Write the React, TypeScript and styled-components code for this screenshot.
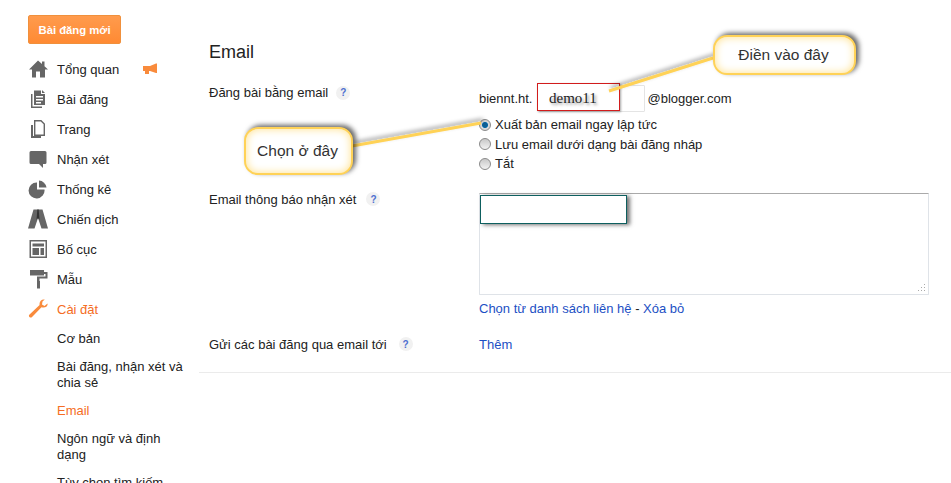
import styled, { createGlobalStyle } from "styled-components";
import { ReactNode } from "react";

const GlobalStyle = createGlobalStyle`
    html, body {
        margin: 0;
        padding: 0;
        background: #fff;
    }
    body {
        font-family: "Liberation Sans", Arial, sans-serif;
        font-size: 13px;
        color: #222;
    }
`;

const Page = styled.div`
    position: relative;
    display: flex;
    width: 951px;
    height: 483px;
    overflow: hidden;
`;

const Sidebar = styled.nav`
    width: 199px;
    flex: none;
    padding: 15px 0 0 28px;
    box-sizing: border-box;
`;

const NewPostButton = styled.div`
    width: 93px;
    height: 29px;
    margin-bottom: 10px;
    display: flex;
    align-items: center;
    justify-content: center;
    box-sizing: border-box;
    border: 1px solid #f0903c;
    border-radius: 2px;
    background: linear-gradient(#ff9b4d, #ff8a33);
    color: #fff;
    font-size: 11.3px;
    font-weight: 700;
`;

const NavRow = styled.div<{ $active?: boolean }>`
    display: flex;
    align-items: center;
    height: 30px;
    color: ${p => (p.$active ? "#f56d24" : "#222")};
`;

const NavIcon = styled.span`
    width: 29px;
    height: 20px;
    flex: none;
    display: flex;
    align-items: center;
`;

const NavLabel = styled.span`
    width: 85px;
`;

const SubNav = styled.div`
    padding-left: 29px;
    padding-top: 7px;
    display: flex;
    flex-direction: column;
    gap: 12px;
`;

const SubItem = styled.div<{ $active?: boolean }>`
    line-height: 16px;
    width: 130px;
    color: ${p => (p.$active ? "#f56d24" : "#222")};
`;

const Main = styled.main`
    flex: 1;
    padding-top: 42px;
`;

const Title = styled.h1`
    margin: 0 0 21px 10px;
    font-size: 18px;
    line-height: 21px;
    font-weight: 400;
    color: #222;
`;

const SettingRow = styled.div<{ $after: number }>`
    display: grid;
    grid-template-columns: 270px 449px;
    padding-left: 10px;
    margin-bottom: ${p => p.$after}px;
`;

const SettingLabel = styled.div<{ $top: number; $gap: number }>`
    display: flex;
    align-items: center;
    gap: ${p => p.$gap}px;
    height: 17px;
    margin-top: ${p => p.$top}px;
`;

const Help = styled.span`
    width: 14px;
    height: 14px;
    border-radius: 50%;
    background: #f1f1f1;
    color: #4d6fd0;
    font-size: 10px;
    font-weight: 700;
    display: flex;
    align-items: center;
    justify-content: center;
`;

const AddressLine = styled.div`
    display: flex;
    align-items: center;
    height: 28px;
`;

const AddressInput = styled.div`
    width: 106px;
    height: 27px;
    margin: 0 3px 0 6px;
    box-sizing: border-box;
    border: 1px solid #e4e4e4;
    border-radius: 1px;
`;

const RadioList = styled.div`
    margin-top: 3px;
    display: flex;
    flex-direction: column;
`;

const RadioRow = styled.label`
    display: flex;
    align-items: center;
    gap: 4px;
    height: 19.5px;
`;

const Radio = styled.span<{ $on?: boolean }>`
    width: 12px;
    height: 12px;
    box-sizing: border-box;
    border-radius: 50%;
    border: 1px solid #8a8a8a;
    background: ${p =>
        p.$on
            ? "radial-gradient(circle, #0a5f96 0 2.5px, #4aa3d8 3px, #d8d8d8 3.5px)"
            : "linear-gradient(#c8c8c8, #f2f2f2)"};
`;

const TextBox = styled.div`
    position: relative;
    width: 450px;
    height: 102px;
    box-sizing: border-box;
    border: 1px solid #dfe3e8;
    border-top-color: #aaa;
    border-radius: 1px;
`;

const ResizeGrip = styled.svg`
    position: absolute;
    right: 2px;
    bottom: 2px;
`;

const LinkLine = styled.div`
    margin-top: 6px;
    line-height: 16px;
`;

const Link = styled.a`
    color: #1c4fc4;
`;

const Divider = styled.div`
    height: 1px;
    background: #ebebeb;
`;

const Callout = styled.div<{ $x: number; $y: number; $w: number; $h: number }>`
    position: absolute;
    left: ${p => p.$x}px;
    top: ${p => p.$y}px;
    width: ${p => p.$w}px;
    height: ${p => p.$h}px;
    box-sizing: border-box;
    padding-right: 2px;
    display: flex;
    align-items: center;
    justify-content: center;
    border: 2px solid #ffd257;
    border-radius: 14px;
    background: #fff;
    box-shadow: inset 0 0 9px #ffe08a, 3px -2px 5px rgba(0, 0, 0, 0.6);
    font-size: 15.5px;
    color: #333;
`;

const LineLayer = styled.svg`
    position: absolute;
    left: 0;
    top: 0;
    pointer-events: none;
`;

const DemoBox = styled.div`
    position: absolute;
    left: 537px;
    top: 83px;
    width: 83px;
    height: 28px;
    box-sizing: border-box;
    border: 1px solid #d21c1c;
    background: #fff;
    box-shadow: 1px 1px 2px rgba(0, 0, 0, 0.35);
    padding: 1px 0 0 11px;
    font-family: "Liberation Serif", serif;
    font-size: 15px;
    line-height: 26px;
    color: #222;
    text-shadow: 2px 2px 3px rgba(0, 0, 0, 0.4);
`;

const CoverBox = styled.div`
    position: absolute;
    left: 480px;
    top: 195px;
    width: 147px;
    height: 29px;
    box-sizing: border-box;
    border: 1px solid #0d5f5f;
    background: #fff;
    box-shadow: 3px 1px 4px rgba(0, 0, 0, 0.55);
`;

function Icon({ children, w = 20, h = 20 }: { children: ReactNode; w?: number; h?: number }) {
    return <svg width={w} height={h} viewBox={`0 0 ${w} ${h}`}>{children}</svg>;
}

const grey = "#666";

const icons: Record<string, ReactNode> = {
    home: <Icon><path fill={grey} d="M10 1.5 L14 5 V2.5 H16.5 V7.2 L20 10.5 H17 V18.5 H12 V12.5 H8 V18.5 H4 V10.5 H1 Z" /></Icon>,
    posts: (
        <Icon>
            <path fill={grey} d="M3 5 H4.5 V17.5 H14 V19 H3 Z" />
            <path fill={grey} fillRule="evenodd" d="M6 1.5 H13 V5 H17 V16 H6 Z M8 7 V8.5 H15 V7 Z M8 10 V11.5 H15 V10 Z M8 13 V14.5 H13 V13 Z" />
            <path fill={grey} d="M14 1 L17 4 H14 Z" />
        </Icon>
    ),
    pages: (
        <Icon>
            <path fill={grey} d="M3 6 H5 V17 H13 V19 H3 Z" />
            <path fill="none" stroke={grey} strokeWidth="1.4" d="M6.7 1.7 H13 L16.3 5 V16.3 H6.7 Z" />
        </Icon>
    ),
    comments: <Icon><path fill={grey} d="M3 2 H17 Q18.5 2 18.5 3.5 V13.5 Q18.5 15 17 15 H15 V19 L11 15 H3 Q1.5 15 1.5 13.5 V3.5 Q1.5 2 3 2 Z" /></Icon>,
    stats: (
        <Icon>
            <path fill={grey} d="M9 3.5 V10.5 H16.5 A8 8 0 1 1 9 3.5 Z" />
            <path fill={grey} d="M11 1.5 A8 8 0 0 1 18.5 8.5 H11 Z" />
        </Icon>
    ),
    campaign: (
        <Icon>
            <path fill={grey} d="M5.5 0.5 H14.5 L20 19.5 H13.5 L10 9 L6.5 19.5 H0 Z" />
            <path fill="#333" d="M9.3 0.5 H10.7 L11.5 11 L10 9 L8.5 11 Z" />
        </Icon>
    ),
    layout: (
        <Icon>
            <path fill={grey} fillRule="evenodd" d="M1.5 1 H19 V19 H1.5 Z M3 2.5 V17.5 H17.5 V2.5 Z" />
            <path fill={grey} d="M4.5 4.5 H16 V7.5 H4.5 Z M4.5 9 H11 V16 H4.5 Z M12.5 9 H16 V16 H12.5 Z" />
        </Icon>
    ),
    template: (
        <Icon>
            <path fill={grey} d="M2 1 H16 V6.5 H2 Z" />
            <path fill={grey} d="M16 3 H19.5 V9.5 H11.5 V12 H9 V7.5 H17.5 V5 H16 Z" />
            <path fill={grey} d="M9 12 H12 V19.5 H9 Z" />
        </Icon>
    ),
    settings: (
        <Icon>
            <path fill="#f98b3c" d="M19.5 4.5 L16.5 7 L14 5.5 L14.5 2.5 L16.8 0.6 C13.5 0 11 2.5 11.6 6 L1.3 15.8 C0 17.2 2.2 19.6 3.8 18.2 L13.5 8.3 C17 9.3 20.2 7.5 19.5 4.5 Z" />
        </Icon>
    ),
};

const navItems = [
    { key: "home", label: "Tổng quan" },
    { key: "posts", label: "Bài đăng" },
    { key: "pages", label: "Trang" },
    { key: "comments", label: "Nhận xét" },
    { key: "stats", label: "Thống kê" },
    { key: "campaign", label: "Chiến dịch" },
    { key: "layout", label: "Bố cục" },
    { key: "template", label: "Mẫu" },
    { key: "settings", label: "Cài đặt", active: true },
];

const subItems = [
    { label: "Cơ bản" },
    { label: "Bài đăng, nhận xét và chia sẻ" },
    { label: "Email", active: true },
    { label: "Ngôn ngữ và định dạng" },
    { label: "Tùy chọn tìm kiếm" },
];

const radios = [
    { label: "Xuất bản email ngay lập tức", on: true },
    { label: "Lưu email dưới dạng bài đăng nháp" },
    { label: "Tắt" },
];

export default function App() {
    return <Page>
        <GlobalStyle />
        <Sidebar>
            <NewPostButton>Bài đăng mới</NewPostButton>
            {navItems.map(item => (
                <NavRow key={item.key} $active={item.active}>
                    <NavIcon>{icons[item.key]}</NavIcon>
                    <NavLabel>{item.label}</NavLabel>
                    {item.key === "home" && (
                        <svg width="16" height="12" viewBox="0 0 16 12">
                            <path fill="#f98b3c" d="M1 3 H8 L14 0.5 H15 V10 H14 L8 8 H7 V11 H3 V8 H1 Z" />
                        </svg>
                    )}
                </NavRow>
            ))}
            <SubNav>
                {subItems.map(item => (
                    <SubItem key={item.label} $active={item.active}>{item.label}</SubItem>
                ))}
            </SubNav>
        </Sidebar>

        <Main>
            <Title>Email</Title>
            <SettingRow $after={19}>
                <SettingLabel $top={0} $gap={8}>Đăng bài bằng email <Help>?</Help></SettingLabel>
                <div>
                    <AddressLine>
                        biennt.ht.
                        <AddressInput />
                        @blogger.com
                    </AddressLine>
                    <RadioList>
                        {radios.map(r => (
                            <RadioRow key={r.label}><Radio $on={r.on} />{r.label}</RadioRow>
                        ))}
                    </RadioList>
                </div>
            </SettingRow>
            <SettingRow $after={20}>
                <SettingLabel $top={-2} $gap={10}>Email thông báo nhận xét <Help>?</Help></SettingLabel>
                <div>
                    <TextBox>
                        <ResizeGrip width="9" height="9" viewBox="0 0 9 9">
                            <path fill="#aaa" d="M7 1h1v1H7z M7 4h1v1H7z M7 7h1v1H7z M4 4h1v1H4z M4 7h1v1H4z M1 7h1v1H1z" />
                        </ResizeGrip>
                    </TextBox>
                    <LinkLine><Link>Chọn từ danh sách liên hệ</Link> - <Link>Xóa bỏ</Link></LinkLine>
                </div>
            </SettingRow>
            <SettingRow $after={19}>
                <SettingLabel $top={-1} $gap={12}>Gửi các bài đăng qua email tới <Help>?</Help></SettingLabel>
                <Link>Thêm</Link>
            </SettingRow>
            <Divider />
        </Main>

        <DemoBox>demo11</DemoBox>
        <CoverBox />
        <LineLayer width="951" height="483">
            <defs>
                <filter id="lineShadow" x="-10%" y="-50%" width="120%" height="200%">
                    <feDropShadow dx="2" dy="-3" stdDeviation="2" floodColor="#000" floodOpacity="0.4" />
                </filter>
            </defs>
            <path d="M609 91 L713 58" stroke="#ffd257" strokeWidth="3" filter="url(#lineShadow)" />
            <path d="M352 146 L481 123" stroke="#ffd257" strokeWidth="3" filter="url(#lineShadow)" />
        </LineLayer>
        <Callout $x={713} $y={35} $w={143} $h={40}>Điền vào đây</Callout>
        <Callout $x={244} $y={127} $w={109} $h={48}>Chọn ở đây</Callout>
    </Page>;
}
